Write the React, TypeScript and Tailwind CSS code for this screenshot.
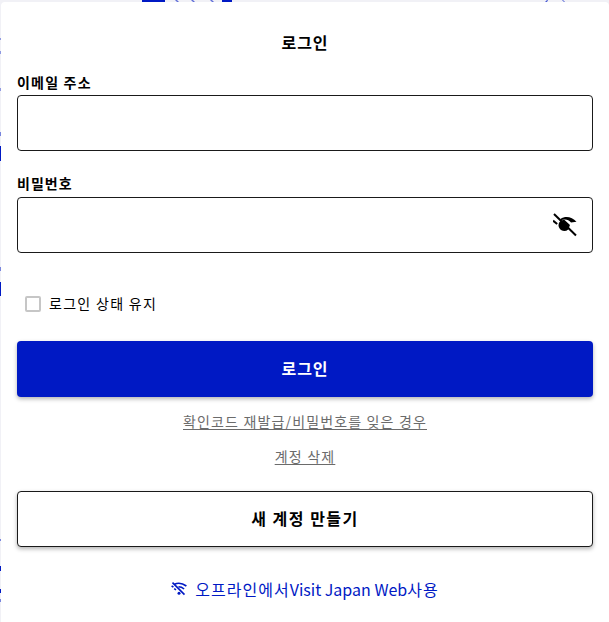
const fontStack = '[font-family:"Noto_Sans_CJK_KR","Noto_Sans",sans-serif]'

function EyeOffIcon() {
  return (
    <svg width="24" height="24" viewBox="0 0 24 24" fill="none" className="absolute right-[15px] top-[15px]">
      <path d="M7.5 6C12.5 2.4 19 3.8 23.5 8.8L18 9.5C15.5 6.5 11 5.5 7.5 8z" fill="#000" />
      <path d="M7.2 8.2a5.6 5.6 0 0 0 8 8.2L17 12 11 6.5z" fill="#000" />
      <path d="M1 1 23 22.5" stroke="#000" strokeWidth="2" />
      <path d="M0 7.6 4.2 11" stroke="#000" strokeWidth="2" />
    </svg>
  )
}

function WifiOffIcon() {
  return (
    <svg width="16" height="14" viewBox="0 0 16 14" fill="none" stroke="#0019c4" strokeWidth="1.6">
      <path d="M3.5 2.2C7 .6 11 .8 15.4 4" />
      <path d="M.6 3.8 2.4 5.2" />
      <path d="M3.2 6.6 5 7.8" />
      <path d="M7.5 4.8c2 0 4 .8 5.6 2.2" />
      <path d="M1.5.6 13.5 12.6" />
      <circle cx="8" cy="11.2" r="1.5" fill="#0019c4" stroke="none" />
    </svg>
  )
}

// scraps of the page behind the dialog, visible round its edge
function BackdropScraps() {
  return (
    <svg width="609" height="622" className="absolute left-0 top-0" fill="#0019c4">
      <rect x="142" y="0" width="23" height="2" />
      <path d="M175 0h2l2 2h-2zM191 0h2l2 2h-2zM210 0h2l2 2h-2z" opacity=".6" />
      <rect x="222" y="0" width="10" height="2" />
      <path d="M545 2l2-2h1l-1 2zM562 0h1l2 2h-1z" opacity=".7" />
      <rect x="0" y="38" width="1" height="2" opacity=".4" />
      <rect x="0" y="51" width="1" height="3" opacity=".4" />
      <rect x="0" y="88" width="1" height="3" opacity=".4" />
      <rect x="0" y="132" width="1" height="4" opacity=".5" />
      <rect x="0" y="146" width="1" height="15" />
      <rect x="0" y="267" width="1" height="4" opacity=".5" />
      <rect x="0" y="282" width="1" height="14" />
      <rect x="0" y="539" width="1" height="2" opacity=".5" />
      <rect x="0" y="566" width="1" height="5" />
      <rect x="0" y="589" width="1" height="4" />
      <rect x="0" y="599" width="1" height="3" opacity=".5" />
    </svg>
  )
}

export default function App() {
  return (
    <div className={`relative h-[622px] w-[609px] overflow-hidden bg-[#f1f1f6] ${fontStack}`}>
      <BackdropScraps />

      <div className="relative ml-px mt-[2px] flex h-[620px] flex-col rounded-t bg-white px-4 text-black">
        <h1 className="mt-[28px] text-center text-base font-bold leading-6 tracking-[1px]">로그인</h1>

        <label className="mt-[17px] text-sm font-bold leading-[22px] tracking-[1.2px]">이메일 주소</label>
        <div className="mt-[2px] h-14 rounded border border-[#1a1a1a]" />

        <label className="mt-[21px] text-sm font-bold leading-[22px] tracking-[1px]">비밀번호</label>
        <div className="relative mt-[3px] h-14 rounded border border-[#1a1a1a]">
          <EyeOffIcon />
        </div>

        <div className="ml-2 mt-[43px] flex h-4 items-center gap-2">
          <span className="size-4 rounded-[2px] border-2 border-[#c6c6c6]" />
          <span className="-translate-y-px text-sm leading-5 tracking-[1.3px]">로그인 상태 유지</span>
        </div>

        <button className="mt-[29px] h-14 rounded bg-[#0019c4] pb-[2px] text-base font-bold tracking-[1px] text-white shadow-[0_2px_4px_rgba(0,0,0,0.3)]">
          로그인
        </button>

        <div className="mt-[14px] text-center text-sm leading-5 tracking-[1.15px] text-[#6b6b6b]">
          <a className="underline underline-offset-2">확인코드 재발급/비밀번호를 잊은 경우</a>
        </div>
        <div className="mt-[15px] text-center text-sm leading-5 tracking-[1.2px] text-[#6b6b6b]">
          <a className="underline underline-offset-2">계정 삭제</a>
        </div>

        <button className="mt-[25px] h-14 rounded border border-[#1a1a1a] bg-white pb-[2px] text-base font-bold tracking-[1.5px] shadow-[0_2px_4px_rgba(0,0,0,0.3)]">
          새 계정 만들기
        </button>

        <div className="mt-[30px] flex items-center justify-center gap-[8px] text-base leading-6 text-[#0019c4]">
          <WifiOffIcon />
          <span>
            <span className="tracking-[1px]">오프라인에서</span>Visit Japan Web<span className="tracking-[1px]">사용</span>
          </span>
        </div>
      </div>
    </div>
  )
}
